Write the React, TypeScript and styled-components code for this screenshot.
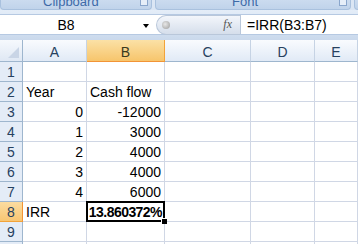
import React from "react";
import styled, { createGlobalStyle } from "styled-components";

const Global = createGlobalStyle`
  html, body { margin: 0; padding: 0; background: #ffffff; overflow: hidden; }
  body { font-family: "Liberation Sans", Arial, sans-serif; }
`;

const Page = styled.div`
  width: 358px;
  height: 244px;
  display: flex;
  flex-direction: column;
  background: #c5d5ea;
  overflow: hidden;
`;

const Ribbon = styled.div`
  height: 10px;
  display: flex;
  gap: 3px;
  background: #dbe6f4;
`;

const Group = styled.div<{ $w: number }>`
  position: relative;
  width: ${(p) => p.$w}px;
  flex: none;
  height: 10px;
  border: 1px solid #a9c1de;
  border-top: none;
  border-radius: 0 0 4px 4px;
  background: linear-gradient(#cbdbef, #c0d3ea);
  box-sizing: border-box;
  font-size: 13px;
  color: #3d6aa8;
  text-align: center;
  line-height: 0px;
  overflow: hidden;
`;

const GroupLabel = styled.span<{ $x: number }>`
  position: absolute;
  left: ${(p) => p.$x}px;
  top: -5px;
  line-height: 13px;
`;

const Launcher = styled.span<{ $x: number }>`
  position: absolute;
  left: ${(p) => p.$x}px;
  top: 0;
  width: 6px;
  height: 5px;
  border: 1px solid #8aa6cc;
  border-top: none;
  background: #e6eef8;
`;

const FormulaArea = styled.div`
  height: 30px;
  padding: 4px 0 5px;
  box-sizing: border-box;
  background: linear-gradient(#e4edf8, #cad9ec);
  display: flex;
`;

const FormulaBar = styled.div`
  flex: 1;
  display: flex;
  align-items: center;
  background: #ffffff;
  border-top: 1px solid #b6c9e2;
  border-bottom: 1px solid #b6c9e2;
`;

const NameBox = styled.div`
  width: 152px;
  height: 100%;
  flex: none;
  position: relative;
  display: flex;
  align-items: center;
  justify-content: center;
  font-size: 14px;
  color: #000;
  padding-right: 20px;
  box-sizing: border-box;
`;

const DropArrow = styled.span`
  position: absolute;
  left: 143px;
  top: 9px;
  width: 0;
  height: 0;
  border-left: 3.5px solid transparent;
  border-right: 3.5px solid transparent;
  border-top: 4px solid #000;
`;

const FxButton = styled.div`
  width: 84px;
  height: 20px;
  flex: none;
  margin-left: 4px;
  border-radius: 10px 0 0 10px;
  background: linear-gradient(#f3f6fb, #d5deeb);
  border: 1px solid #b9c7da;
  border-right: none;
  box-sizing: border-box;
  position: relative;
  display: flex;
  align-items: center;
  justify-content: flex-end;
  padding-right: 8px;
`;

const Knob = styled.span`
  position: absolute;
  left: 5px;
  top: 5px;
  width: 8px;
  height: 8px;
  border-radius: 50%;
  background: radial-gradient(circle at 40% 40%, #e8e8e8, #9a9a9a);
`;

const Fx = styled.span`
  font-family: "Liberation Serif", "Times New Roman", serif;
  font-style: italic;
  font-size: 12px;
  color: #555;
`;

const Formula = styled.div`
  flex: 1;
  height: 100%;
  border-left: 1px solid #b9c7da;
  padding-left: 6px;
  display: flex;
  align-items: center;
  font-size: 14px;
  color: #000;
`;

const Sheet = styled.div`
  flex: 1;
  display: grid;
  grid-template-columns: 23px 64px 78px 86px 64px 1fr;
  grid-template-rows: 22px repeat(10, 20px);
  background: #ffffff;
  position: relative;
`;

const Corner = styled.div`
  background: linear-gradient(#f6f9fd, #dfe8f4);
  border-right: 1px solid #9eb6ce;
  border-bottom: 1px solid #9eb6ce;
  position: relative;
  &::after {
    content: "";
    position: absolute;
    right: 3px;
    bottom: 3px;
    width: 0;
    height: 0;
    border-left: 11px solid transparent;
    border-bottom: 11px solid #c9d5e6;
  }
`;

const ColHead = styled.div<{ $sel?: boolean }>`
  display: flex;
  align-items: center;
  justify-content: center;
  font-size: 14px;
  color: ${(p) => (p.$sel ? "#3a3a1e" : "#27415f")};
  background: ${(p) =>
    p.$sel
      ? "linear-gradient(#fbe1a6, #f7c56c)"
      : "linear-gradient(#f9fbfe, #e1eaf6)"};
  border-right: 1px solid ${(p) => (p.$sel ? "#f2a33a" : "#c6d3e4")};
  border-bottom: 1px solid ${(p) => (p.$sel ? "#f29436" : "#9eb6ce")};
  padding-top: 2px;
  box-sizing: border-box;
`;

const RowHead = styled.div<{ $sel?: boolean }>`
  display: flex;
  align-items: flex-end;
  justify-content: center;
  padding-bottom: 1px;
  box-sizing: border-box;
  font-size: 14px;
  color: #27415f;
  background: ${(p) =>
    p.$sel ? "linear-gradient(#fbdca0, #f8c673)" : "#e4ecf7"};
  border-right: 1px solid ${(p) => (p.$sel ? "#f29436" : "#9eb6ce")};
  border-bottom: 1px solid ${(p) => (p.$sel ? "#f2a33a" : "#9eb6ce")};
`;

const Cell = styled.div<{ $align?: "left" | "right"; $bold?: boolean }>`
  display: flex;
  align-items: flex-end;
  justify-content: ${(p) => (p.$align === "right" ? "flex-end" : "flex-start")};
  padding: 0 ${(p) => (p.$bold ? "2px" : "3px")} 1px 3px;
  box-sizing: border-box;
  font-size: 14px;
  letter-spacing: ${(p) => (p.$bold ? "-0.55px" : "0")};
  font-weight: ${(p) => (p.$bold ? 700 : 400)};
  color: #000;
  border-right: 1px solid #d0d7e5;
  border-bottom: 1px solid #d0d7e5;
  white-space: nowrap;
  overflow: visible;
`;

const Active = styled.div`
  position: absolute;
  left: 86px;
  top: 161px;
  width: 79px;
  height: 21px;
  border: 2px solid #000;
  box-sizing: border-box;
  pointer-events: none;
  &::after {
    content: "";
    position: absolute;
    right: -4px;
    bottom: -4px;
    width: 5px;
    height: 5px;
    background: #000;
    border: 1px solid #fff;
    border-right: none;
    border-bottom: none;
  }
`;

const cols = ["A", "B", "C", "D", "E"];

type Row = { a?: string; aAlign?: "left" | "right"; b?: string; bAlign?: "left" | "right"; bBold?: boolean };

const rows: Row[] = [
  {},
  { a: "Year", aAlign: "left", b: "Cash flow", bAlign: "left" },
  { a: "0", aAlign: "right", b: "-12000", bAlign: "right" },
  { a: "1", aAlign: "right", b: "3000", bAlign: "right" },
  { a: "2", aAlign: "right", b: "4000", bAlign: "right" },
  { a: "3", aAlign: "right", b: "4000", bAlign: "right" },
  { a: "4", aAlign: "right", b: "6000", bAlign: "right" },
  { a: "IRR", aAlign: "left", b: "13.860372%", bAlign: "right", bBold: true },
  {},
  {},
];

export default function App() {
  return (
    <>
      <Global />
      <Page>
        <Ribbon>
          <Group $w={152}>
            <GroupLabel $x={42}>Clipboard</GroupLabel>
            <Launcher $x={139} />
          </Group>
          <Group $w={196}>
            <GroupLabel $x={76}>Font</GroupLabel>
            <Launcher $x={183} />
          </Group>
          <Group $w={20} />
        </Ribbon>
        <FormulaArea>
          <FormulaBar>
            <NameBox>
              B8
              <DropArrow />
            </NameBox>
            <FxButton>
              <Knob />
              <Fx>fx</Fx>
            </FxButton>
            <Formula>=IRR(B3:B7)</Formula>
          </FormulaBar>
        </FormulaArea>
        <Sheet>
          <Corner />
          {cols.map((c) => (
            <ColHead key={c} $sel={c === "B"}>
              {c}
            </ColHead>
          ))}
          {rows.map((r, i) => (
            <React.Fragment key={i}>
              <RowHead $sel={i === 7}>{i + 1}</RowHead>
              <Cell $align={r.aAlign}>{r.a}</Cell>
              <Cell $align={r.bAlign} $bold={r.bBold}>
                {r.b}
              </Cell>
              <Cell />
              <Cell />
              <Cell />
            </React.Fragment>
          ))}
          <Active />
        </Sheet>
      </Page>
    </>
  );
}
